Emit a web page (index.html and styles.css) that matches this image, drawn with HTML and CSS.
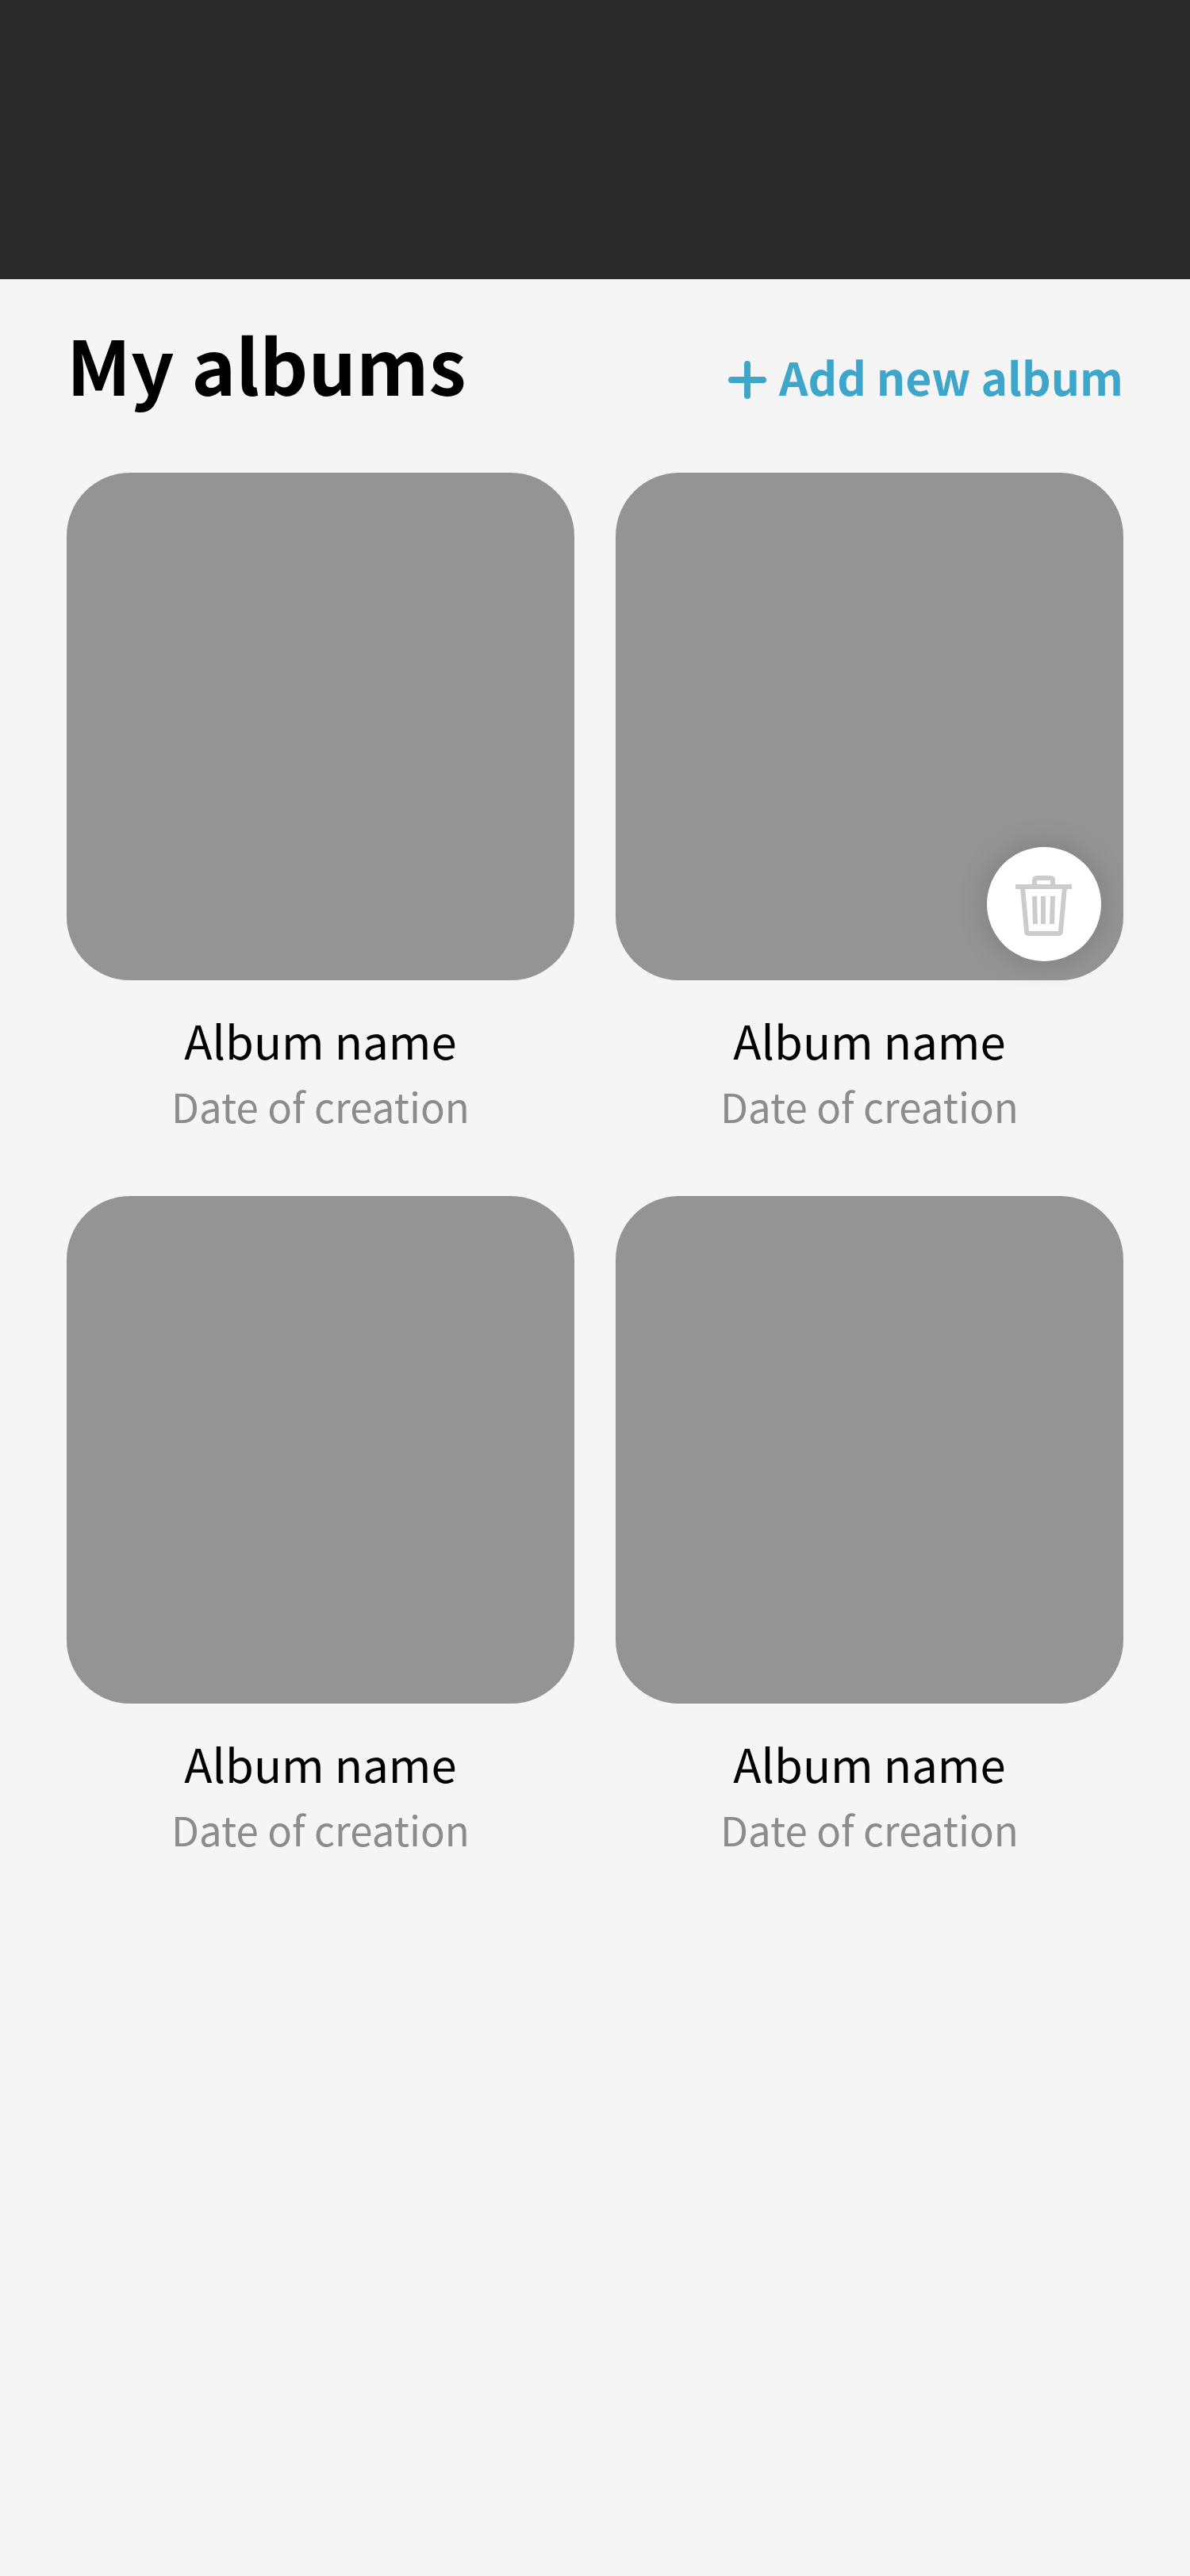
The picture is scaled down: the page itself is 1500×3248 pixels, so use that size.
FILE: index.html
```html
<!DOCTYPE html>
<html lang="en">
<head>
  <meta charset="utf-8">
  <meta name="viewport" content="width=device-width, initial-scale=1">
  <title>My albums</title>
  <link rel="stylesheet" href="styles.css">
</head>
<body>
  <header class="topbar"></header>
  <main class="page">
    <div class="heading">
      <h1 class="title">My albums</h1>
      <button class="add" type="button">
        <svg class="add-icon" viewBox="0 0 48 44" aria-hidden="true"><path d="M24 4v40M4 24h40"/></svg>
        <span>Add new album</span>
      </button>
    </div>
    <ul class="albums">
      <li class="album">
        <div class="cover"></div>
        <h2 class="name">Album name</h2>
        <p class="date">Date of creation</p>
      </li>
      <li class="album">
        <div class="cover">
          <button class="delete" type="button" aria-label="Delete album">
            <svg class="delete-icon" viewBox="0 0 72 72" aria-hidden="true">
              <path d="M0 14h71"/>
              <path d="M24 13V6q0-3 3-3h17q3 0 3 3v7"/>
              <path d="M9 15l5 55q0 3 3 3h37q3 0 3-3l5-55"/>
              <path d="M24 26l1 35M35 26v35M47 26l-1 35"/>
            </svg>
          </button>
        </div>
        <h2 class="name">Album name</h2>
        <p class="date">Date of creation</p>
      </li>
      <li class="album">
        <div class="cover"></div>
        <h2 class="name">Album name</h2>
        <p class="date">Date of creation</p>
      </li>
      <li class="album">
        <div class="cover"></div>
        <h2 class="name">Album name</h2>
        <p class="date">Date of creation</p>
      </li>
    </ul>
  </main>
</body>
</html>
```
FILE: styles.css
```css
* {
  box-sizing: border-box;
}

body {
  margin: 0;
  background: #f5f5f5;
  color: #000;
  font-family: "Noto Sans CJK SC", "Noto Sans", sans-serif;
}

.topbar {
  height: 352px;
  background: #292929;
}

.page {
  padding: 36px 84px 84px;
}

.heading {
  display: flex;
  justify-content: space-between;
  align-items: baseline;
  margin-bottom: 68px;
}

.title {
  margin: 0;
  font-size: 95px;
  font-weight: 700;
  line-height: 140px;
}

.add {
  display: flex;
  align-items: baseline;
  gap: 16px;
  padding: 0;
  border: 0;
  background: none;
  color: #3da6ca;
  font: inherit;
  font-size: 57px;
  font-weight: 700;
  line-height: 80px;
  cursor: pointer;
}

.add-icon {
  width: 48px;
  height: 44px;
  overflow: visible;
  fill: none;
  stroke: currentColor;
  stroke-width: 8;
  stroke-linecap: round;
}

.albums {
  display: grid;
  grid-template-columns: 1fr 1fr;
  gap: 72px 52px;
  margin: 0;
  padding: 0;
  list-style: none;
}

.album {
  text-align: center;
}

.cover {
  position: relative;
  aspect-ratio: 1;
  margin-bottom: 34px;
  border-radius: 80px;
  background: #949494;
}

.delete {
  position: absolute;
  right: 28px;
  bottom: 24px;
  display: flex;
  align-items: center;
  justify-content: center;
  width: 144px;
  height: 144px;
  padding: 0;
  border: 0;
  border-radius: 50%;
  background: #fff;
  box-shadow: 0 0 40px rgba(0, 0, 0, 0.16);
  color: #ccc;
  cursor: pointer;
}

.delete-icon {
  width: 72px;
  height: 72px;
  overflow: visible;
  fill: none;
  stroke: currentColor;
  stroke-width: 6;
}

.name,
.date {
  margin: 0;
  font-weight: 400;
}

.name {
  font-size: 58px;
  line-height: 82px;
}

.date {
  color: #8c8c8c;
  font-size: 51px;
  line-height: 84px;
}
```
